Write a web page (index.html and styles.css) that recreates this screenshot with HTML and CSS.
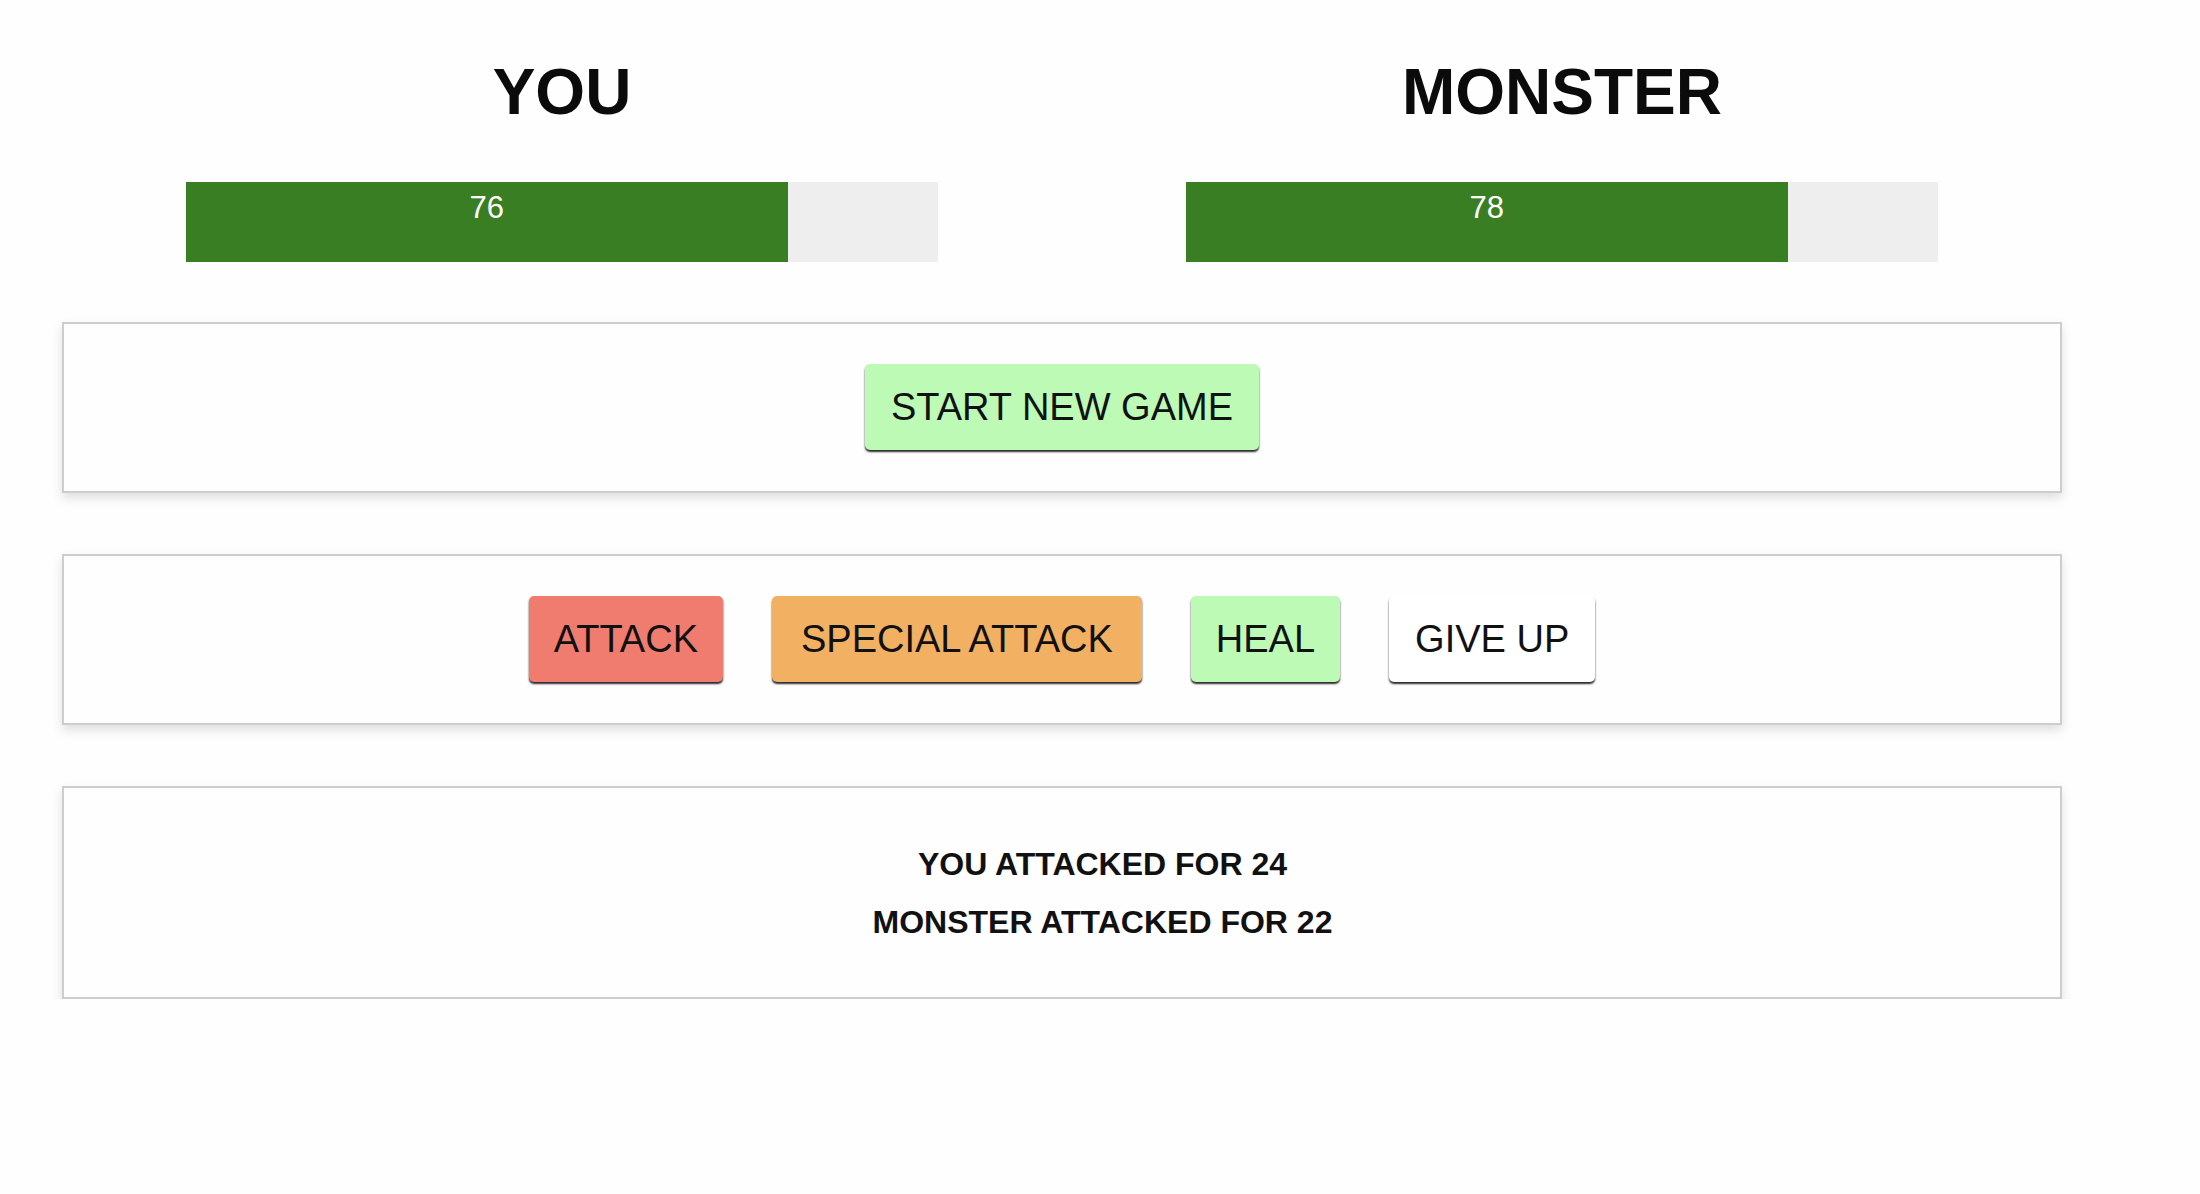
FILE: index.html
```html
<!DOCTYPE html>
<html lang="en">
<head>
<meta charset="utf-8">
<title>Monster Slayer</title>
<link rel="stylesheet" href="styles.css">
</head>
<body>
<div class="page">
  <section class="players">
    <div class="player">
      <h1 class="name">YOU</h1>
      <div class="healthbar">
        <div class="health" style="width: 80%;">76</div>
      </div>
    </div>
    <div class="player">
      <h1 class="name">MONSTER</h1>
      <div class="healthbar">
        <div class="health" style="width: 80%;">78</div>
      </div>
    </div>
  </section>

  <section class="card controls">
    <button class="btn btn-start">START NEW GAME</button>
  </section>

  <section class="card controls">
    <button class="btn btn-attack">ATTACK</button>
    <button class="btn btn-special">SPECIAL ATTACK</button>
    <button class="btn btn-heal">HEAL</button>
    <button class="btn btn-giveup">GIVE UP</button>
  </section>

  <section class="card log">
    <ul class="log-list">
      <li>You attacked for 24</li>
      <li>Monster attacked for 22</li>
    </ul>
  </section>
</div>
</body>
</html>
```

FILE: styles.css
```css
html, body {
  margin: 0;
  padding: 0;
  background: #fefefe;
}

body {
  font-family: "Liberation Sans", Arial, Helvetica, sans-serif;
  color: #111;
}

.page {
  width: 2000px;
  padding: 54px 0 0 62px;
}

.players {
  display: flex;
}

.player {
  width: 1000px;
  display: flex;
  flex-direction: column;
  align-items: center;
}

.name {
  margin: 0;
  font-size: 64px;
  line-height: 77px;
  font-weight: 700;
  color: #0b0b0b;
  text-align: center;
}

.healthbar {
  margin-top: 51px;
  width: 752px;
  height: 80px;
  background: #eeeeee;
}

.health {
  height: 80px;
  background: #3a7e23;
  color: #ffffff;
  font-size: 31px;
  line-height: 52px;
  text-align: center;
}

.card {
  margin-top: 61px;
  box-sizing: border-box;
  width: 2000px;
  border: 2px solid #cdcdcd;
  background: #fefefe;
  box-shadow: 0 5px 10px rgba(0, 0, 0, 0.13);
}

.players + .card {
  margin-top: 60px;
}

.controls {
  display: flex;
  justify-content: center;
  align-items: flex-start;
  gap: 49px;
  padding: 40px 0 41px;
}

.btn {
  font-family: "Liberation Sans", Arial, Helvetica, sans-serif;
  font-size: 38px;
  line-height: 44px;
  color: #111;
  padding: 21px 26px;
  border: none;
  border-radius: 5px;
  box-shadow: 0 2px 2px rgba(0, 0, 0, 0.85);
  margin: 0;
  cursor: pointer;
}

.btn-start { background: #bcfab6; }
.btn-attack { background: #f07c6f; padding-left: 25px; padding-right: 25px; }
.btn-special { background: #f2b063; padding-left: 29px; padding-right: 29px; }
.btn-heal { background: #bcfab6; padding-left: 25px; padding-right: 25px; }
.btn-giveup { background: #ffffff; }

.log {
  padding: 52px 0 51px;
}

.log-list {
  list-style: none;
  margin: 0;
  padding: 0 0 0 81px;
  display: flex;
  flex-direction: column;
  gap: 10px;
  text-align: center;
  font-weight: 700;
  font-size: 32px;
  line-height: 48px;
  text-transform: uppercase;
  color: #111;
}
```
